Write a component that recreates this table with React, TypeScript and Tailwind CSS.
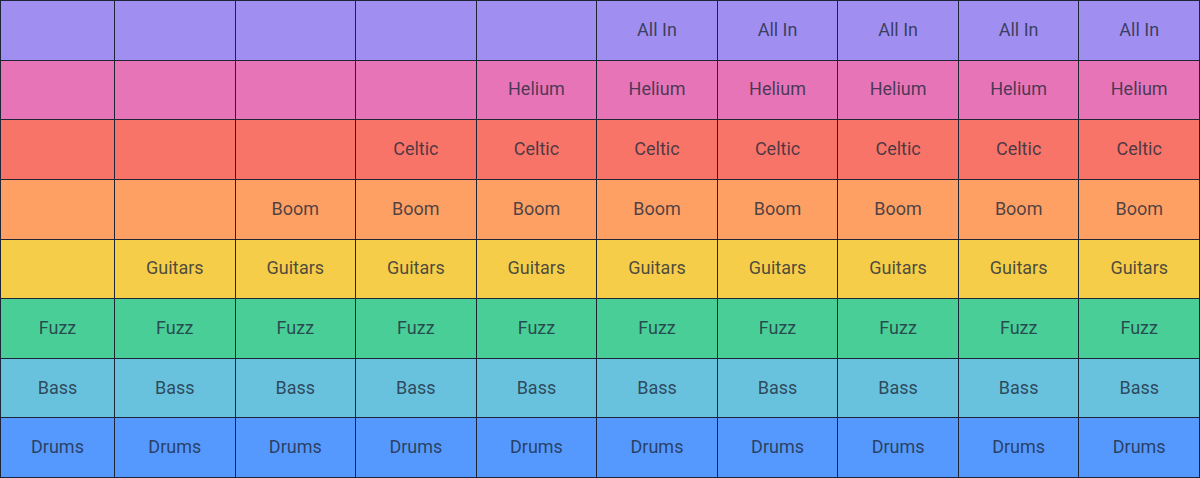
const rows = [
  { label: "All In", start: 5, bg: "bg-[#a08ff0]" },
  { label: "Helium", start: 4, bg: "bg-[#e874b8]" },
  { label: "Celtic", start: 3, bg: "bg-[#f87468]" },
  { label: "Boom", start: 2, bg: "bg-[#fea063]" },
  { label: "Guitars", start: 1, bg: "bg-[#f5cd48]" },
  { label: "Fuzz", start: 0, bg: "bg-[#4ace98]" },
  { label: "Bass", start: 0, bg: "bg-[#68c2dd]" },
  { label: "Drums", start: 0, bg: "bg-[#5599fe]" },
];

const cols = Array.from({ length: 10 }, (_, i) => i);

const App: React.FC = () => {
  return (
    <div className="w-[1200px] h-[478px] grid grid-cols-[114px_repeat(9,1fr)] grid-rows-8 border-l border-t border-[#1e2537] font-['Roboto',sans-serif]">
      {rows.map((row) =>
        cols.map((c) => (
          <div
            key={row.label + c}
            className={`${row.bg} border-r border-b border-[#1e2537] flex items-center justify-center pb-[2px] text-[18px] text-[#1e293b]/80`}
          >
            {c >= row.start ? row.label : ""}
          </div>
        ))
      )}
    </div>
  );
};

export default App;
